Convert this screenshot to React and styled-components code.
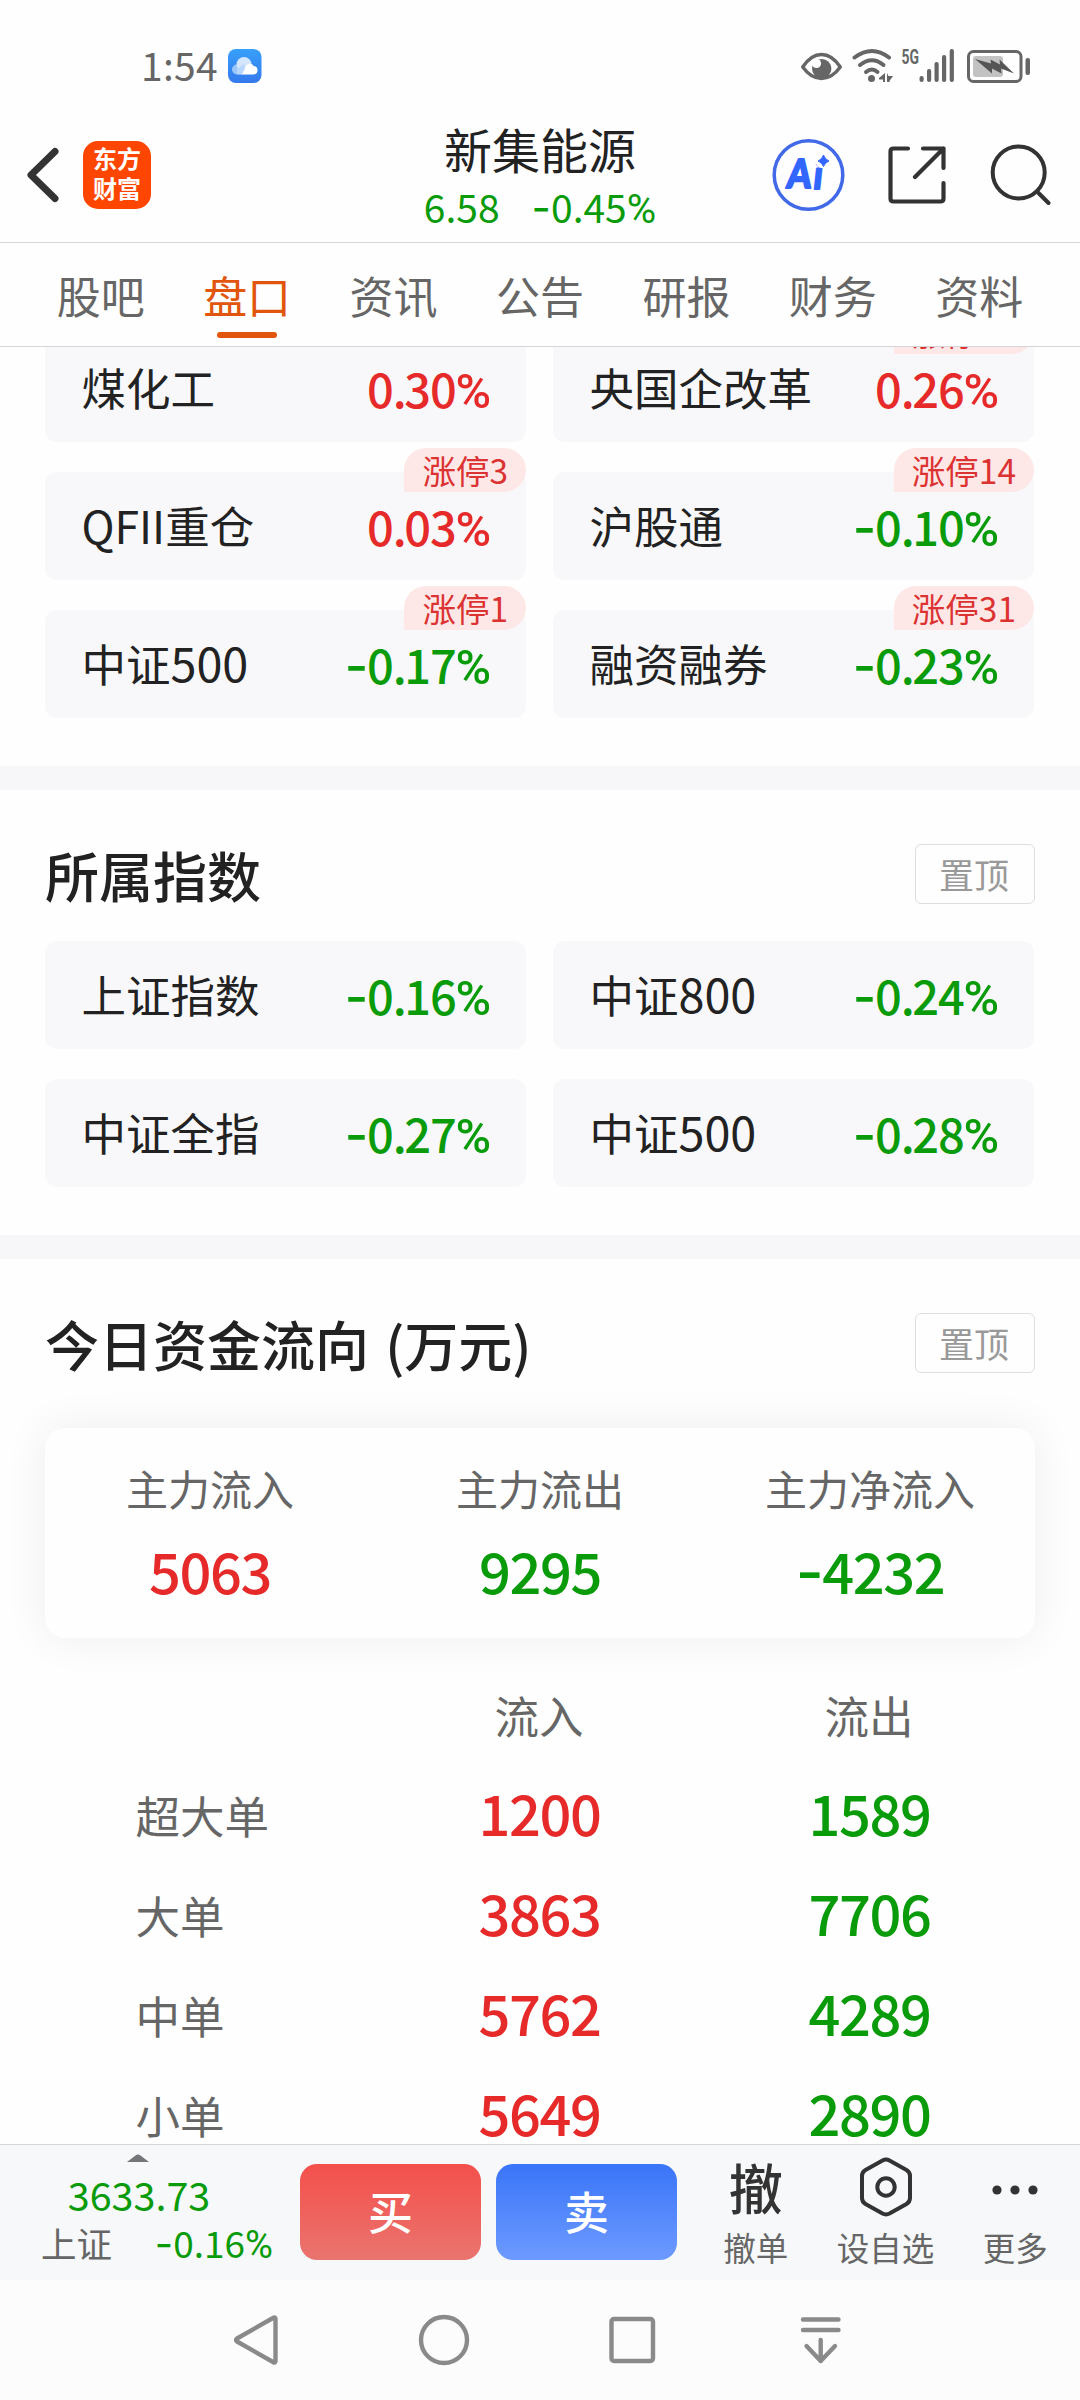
import React from "react";
import styled, { createGlobalStyle, css } from "styled-components";

const RED = "#e62a2a";
const GREEN = "#0a9b0a";
const CJK = `"Noto Sans CJK SC", "Noto Sans", sans-serif`;

const toneColor = { up: RED, down: GREEN };

const GlobalStyle = createGlobalStyle`
  * { box-sizing: border-box; }
  body { margin: 0; background: #fefefe; }
`;

const Screen = styled.div`
  width: 1080px;
  height: 2400px;
  display: flex;
  flex-direction: column;
  overflow: hidden;
  background: #fefefe;
  color: #222;
  font-family: ${CJK};
  line-height: 1;
  white-space: nowrap;
`;

/* ---------- numbers ---------- */

const Figure = styled.span`
  display: inline-flex;
  align-items: baseline;
  font-size: ${(p) => p.$size}px;
  font-weight: ${(p) => p.$weight || 400};
  letter-spacing: ${(p) => (p.$weight ? "-0.025em" : "0")};
  color: ${(p) => toneColor[p.$tone] || "inherit"};
  line-height: 1;
`;

const Sign = styled.span`
  font-family: Inter, sans-serif;
  font-size: 1.08em;
  line-height: 0;
`;

const Point = styled.span`
  letter-spacing: ${(p) => (p.$tight ? "-0.05em" : "0")};
`;

const Percent = styled.span`
  font-family: Roboto, sans-serif;
  font-size: 1.03em;
  line-height: 0;
`;

function Num({ value, size, weight, tone }) {
  const negative = value.startsWith("-");
  const percent = value.endsWith("%");
  const [whole, fraction] = value.replace(/^-/, "").replace(/%$/, "").split(".");
  const resolved = tone || (negative ? "down" : "up");
  return (
    <Figure $size={size} $weight={weight} $tone={resolved}>
      {negative && <Sign>-</Sign>}
      <span>
        {whole}
        {fraction && <Point $tight={Boolean(weight)}>.</Point>}
        {fraction}
      </span>
      {percent && <Percent>%</Percent>}
    </Figure>
  );
}

/* ---------- status bar ---------- */

const StatusBar = styled.div`
  flex: none;
  height: 108px;
  padding: 24px 49px 0 141px;
  display: flex;
  align-items: center;
  color: #666;
`;

const Clock = styled.span`
  font-size: 39px;
  letter-spacing: 0.3px;
  padding-bottom: 3px;
  margin-right: 10px;
`;

const StatusIcons = styled.div`
  margin-left: auto;
  display: flex;
  align-items: center;
`;

const CloudIcon = () => (
  <svg width="34" height="34" viewBox="0 0 34 34">
    <defs>
      <linearGradient id="cloudBg" x1="0" y1="0" x2="0" y2="1">
        <stop offset="0" stopColor="#37a0fb" />
        <stop offset="1" stopColor="#3579ec" />
      </linearGradient>
    </defs>
    <rect width="33.500" height="34" rx="8" fill="url(#cloudBg)" />
    <circle cx="9" cy="20.500" r="5" fill="#9cc6fa" />
    <circle cx="16" cy="15.500" r="7.500" fill="#d3e6fd" />
    <path d="M12 25.500 Q15 24 17 19 Q19 14 23.500 15 Q25 15.500 25.500 17 Q29.500 17.500 29.500 21.200 Q29.500 25.500 25 25.500Z" fill="#fff" />
    <path d="M9 20 L16 15 L17 19 Q15 24 12 25.500 L9 25.500Z" fill="#b9d7fc" />
  </svg>
);

const StatusGlyphs = () => (
  <svg width="231" height="40" viewBox="800 45 231 40" fill="none">
    <circle cx="821.700" cy="67.700" r="9.700" fill="#666" />
    <circle cx="816.500" cy="62.500" r="4.600" fill="#fefefe" />
    <path d="M802.700 66 Q811 53.500 821.500 53.500 Q832 53.500 840.300 66 Q832 77.500 821.500 77.500 Q811 77.500 802.700 66Z" stroke="#666" strokeWidth="3.400" strokeLinejoin="round" />
    <g stroke="#666" strokeWidth="4" strokeLinecap="round">
      <path d="M854.500 56.500 Q872 43.500 889 56.500" />
      <path d="M860 64 Q872 54.500 883.500 64" />
      <path d="M866 71 Q872 66 877.500 71" />
    </g>
    <circle cx="871.500" cy="77.500" r="3.500" fill="#666" />
    <path d="M879 77 L885 72 L885 81 L883 81 L883 78.500 L879 78.500Z" fill="#666" />
    <path d="M887 72 L888.500 75 L893 75 L889.500 80 L889.500 81 L887 81Z" fill="#666" />
    <text x="901.500" y="63" fontSize="20" fontWeight="700" fontFamily="Roboto, sans-serif" fill="#666" textLength="17.500" lengthAdjust="spacingAndGlyphs">5G</text>
    <g fill="#666">
      <rect x="919.500" y="75" width="4.200" height="6" rx="2" />
      <rect x="927" y="68" width="4.200" height="13" rx="2" />
      <rect x="934.500" y="61" width="4.200" height="20" rx="2" />
      <rect x="942" y="54" width="4.200" height="27" rx="2" />
      <rect x="949.700" y="48" width="4.200" height="33" rx="2" />
    </g>
    <rect x="968.500" y="50.500" width="52.500" height="30" rx="5" stroke="#666" strokeWidth="3" />
    <rect x="973" y="55" width="30" height="21" rx="3" fill="#c2c2c2" />
    <path d="M975 58 L991 62.500 L990.500 58.500 L1000 63.500 L999.500 58.500 L1014 72.500 L1001 67.500 L1001.500 72.500 L992 67.500 L992 72.500Z" fill="#555" />
    <rect x="1025.500" y="57" width="4.500" height="17" rx="2" fill="#666" />
  </svg>
);

/* ---------- header ---------- */

const Header = styled.header`
  flex: none;
  height: 135px;
  display: grid;
  grid-template-columns: 1fr auto 1fr;
  align-items: center;
  padding: 0 29px 0 26px;
  border-bottom: 1px solid #d5d5d7;
`;

const HeaderLeft = styled.div`
  display: flex;
  align-items: center;
  gap: 24px;
`;

const HeaderRight = styled.div`
  display: flex;
  align-items: center;
  justify-content: flex-end;
  gap: 43px;
`;

const BrandMark = styled.div`
  width: 68px;
  height: 68px;
  border-radius: 15px;
  background: #fe4600;
  color: #fff;
  font-size: 24px;
  font-weight: 700;
  line-height: 30px;
  text-align: center;
  padding-top: 2px;
`;

const StockTitle = styled.div`
  display: flex;
  flex-direction: column;
  align-items: center;
  padding: 5px 0 0 3px;
`;

const StockName = styled.h1`
  margin: 0;
  font-size: 48px;
  font-weight: 400;
  line-height: 58px;
`;

const StockQuote = styled.div`
  display: flex;
  gap: 32px;
  height: 60px;
  align-items: center;
`;

const BackIcon = () => (
  <svg width="33" height="56" viewBox="0 0 33 56" fill="none" stroke="#333" strokeWidth="7" strokeLinecap="round" strokeLinejoin="round">
    <path d="M29 4.500 L5 28 L29 51.500" />
  </svg>
);

const AiIcon = () => (
  <svg width="73" height="74" viewBox="0.500 0 73 74">
    <circle cx="37" cy="37" r="34.300" fill="none" stroke="#4169e8" strokeWidth="3.500" />
    <text transform="translate(14.500 49.500) skewX(-6) scale(0.86 1)" fontSize="40" fontWeight="900" fontFamily="Lato, sans-serif" fill="#3366ff" stroke="#3366ff" strokeWidth="2" strokeLinejoin="round">
      A<tspan dx="3" dy="1">i</tspan>
    </text>
    <circle cx="51.500" cy="22" r="8.200" fill="#fefefe" />
    <path d="M52 17 Q53.500 21.500 57.500 23 Q53.500 24.500 52 28.500 Q50.500 24.500 46.500 23 Q50.500 21.500 52 17Z" fill="#3366ff" stroke="#3366ff" strokeLinejoin="round" />
  </svg>
);

const ShareIcon = () => (
  <svg width="58" height="60" viewBox="1 0 58 60" fill="none" stroke="#333" strokeWidth="4.200" strokeLinecap="round" strokeLinejoin="round">
    <path d="M21 3.500 H6.500 Q3.500 3.500 3.500 6.500 V53.500 Q3.500 56.500 6.500 56.500 H53.500 Q56.500 56.500 56.500 53.500 V38" />
    <path d="M36 3.500 H56.500 V23 M56.500 3.500 L28 32" />
  </svg>
);

const SearchIcon = () => (
  <svg width="62" height="62" viewBox="0 0 62 62" fill="none" stroke="#333" strokeWidth="4" strokeLinecap="round">
    <circle cx="29.700" cy="28.500" r="26" />
    <path d="M48 47.500 L59.500 59" />
  </svg>
);

/* ---------- tabs ---------- */

const Tabs = styled.nav`
  flex: none;
  height: 104px;
  padding: 0 27.500px;
  display: flex;
  border-bottom: 1px solid #d5d5d7;
`;

const Tab = styled.div`
  flex: 1;
  display: flex;
  flex-direction: column;
  align-items: center;
  font-size: 44px;
  line-height: 60px;
  padding-top: 22px;
  color: ${(p) => (p.$active ? "#e1560c" : "#666")};
  ${(p) =>
    p.$active &&
    css`
      &::after {
        content: "";
        width: 60px;
        height: 6px;
        margin-top: 7px;
        border-radius: 3px;
        background: #e1560c;
      }
    `}
`;

/* ---------- content ---------- */

const Content = styled.main`
  flex: 1;
  min-height: 0;
  overflow: hidden;
`;

const Section = styled.section`
  padding: 0 45px 48px;
`;

const ScrolledSection = styled(Section)`
  margin-top: -13px;
`;

const Divider = styled.div`
  height: 24px;
  background: #f7f7f9;
`;

const QuoteGrid = styled.div`
  display: grid;
  grid-template-columns: 481px 481px;
  gap: 30px 27px;
`;

const QuoteCard = styled.div`
  position: relative;
  height: 108px;
  padding: 0 36px 2px 36.500px;
  display: flex;
  align-items: center;
  justify-content: space-between;
  background: #f8f8fa;
  border-radius: 12px;
`;

const QuoteName = styled.span`
  font-size: 44.500px;
`;

const NameDigits = styled.span`
  font-size: 1.05em;
  line-height: 0;
`;

const LimitBadge = styled.span`
  position: absolute;
  right: 0;
  top: -24px;
  height: 44px;
  padding: 0 18px;
  line-height: 44px;
  font-size: 33.500px;
  color: #dc3232;
  background: #fde8e7;
  border-radius: 22px 22px 22px 0;
`;

const SectionHead = styled.div`
  height: 151px;
  padding: 54px 0 37px;
  display: flex;
  align-items: center;
  justify-content: space-between;
`;

const SectionTitle = styled.h2`
  margin: 0;
  font-size: 54px;
  font-weight: 500;
  line-height: 60px;
  padding-top: 2px;
  word-spacing: 4px;
`;

const PinButton = styled.button`
  width: 120px;
  height: 60px;
  padding: 0 2px 0 0;
  border: 1px solid #dedede;
  border-radius: 6px;
  background: #fefefe;
  color: #999;
  font: 400 35px/56px ${CJK};
`;

const SummaryCard = styled.div`
  display: grid;
  grid-template-columns: repeat(3, 1fr);
  height: 210px;
  margin-top: 18px;
  border-radius: 20px;
  background: #fefefe;
  box-shadow: 0 0 44px rgba(0, 0, 0, 0.07);
`;

const SummaryCell = styled.div`
  display: flex;
  flex-direction: column;
  align-items: center;
  padding-top: 39px;
  gap: 33px;
`;

const SummaryLabel = styled.span`
  font-size: 42px;
  color: #666;
`;

const FlowTable = styled.div`
  display: grid;
  grid-template-columns: repeat(3, 1fr);
  grid-template-rows: 94px repeat(4, 100px);
  margin-top: 31px;
  justify-items: center;
  align-items: center;
`;

const FlowLabel = styled.span`
  justify-self: ${(p) => (p.$row ? "start" : "center")};
  padding: ${(p) => (p.$row ? "4px 0 0 90.5px" : "0 2px 2px 0")};
  font-size: 44.500px;
  color: #666;
`;

const FlowValue = styled.span`
  padding: 0 1px 3px 0;
`;

/* ---------- trade bar ---------- */

const TradeBar = styled.footer`
  flex: none;
  height: 136px;
  display: flex;
  border-top: 1px solid #d3d6da;
  background: #f6f8fa;
`;

const IndexTicker = styled.div`
  width: 300px;
  display: flex;
  flex-direction: column;
  padding: 9px 24px 0 0;
  align-items: center;
`;

const IndexValue = styled.div`
  height: 48px;
  margin-top: 8px;
  padding-left: 2px;
  display: flex;
  align-items: center;
`;

const IndexChange = styled.div`
  align-self: stretch;
  height: 48px;
  padding: 1px 3px 0 41px;
  display: flex;
  align-items: center;
  justify-content: space-between;
  color: #666;
  font-size: 35.500px;
`;

const TradeButton = styled.button`
  width: 181px;
  height: 96px;
  margin: 19px 15px 0 0;
  padding: 0 0 4px;
  border: 0;
  border-radius: 17px;
  color: #fff;
  font: 500 45px/1 ${CJK};
  background: ${(p) =>
    p.$side === "buy"
      ? "linear-gradient(#f4504b, #ea746f)"
      : "linear-gradient(#3a75f8, #6d9aff)"};
`;

const Actions = styled.div`
  flex: 1;
  display: grid;
  grid-template-columns: repeat(3, 1fr);
  margin-left: -1px;
`;

const Action = styled.div`
  display: flex;
  flex-direction: column;
  align-items: center;
  font-size: 32.500px;
  color: #666;
`;

const ActionIcon = styled.div`
  height: 86px;
  display: flex;
  align-items: center;
  justify-content: center;
  color: #333;
  font-size: 54px;
`;

const CancelGlyph = styled.span`
  font-weight: 500;
  padding-bottom: 3px;
`;

const SettingIcon = () => (
  <svg width="56" height="62" viewBox="-1 0 56 62" fill="none" stroke="#333" strokeWidth="4">
    <path d="M24.500 3.500 Q28 1.700 31.500 3.500 L48.500 13 Q52 15 52 19 V41 Q52 45 48.500 47 L31.500 56.500 Q28 58.300 24.500 56.500 L7.500 47 Q4 45 4 41 V19 Q4 15 7.500 13Z" />
    <circle cx="28" cy="30" r="8.700" />
  </svg>
);

const MoreIcon = () => (
  <svg width="48" height="14" viewBox="0 0 48 14" fill="#333">
    <circle cx="6" cy="9" r="4.600" />
    <circle cx="24" cy="9" r="4.600" />
    <circle cx="42" cy="9" r="4.600" />
  </svg>
);

/* ---------- system navigation ---------- */

const SystemNav = styled.div`
  flex: none;
  height: 120px;
  padding: 0 164px 0 161px;
  display: grid;
  grid-template-columns: repeat(4, 1fr);
  place-items: center;
  background: #fcfcfc;
`;

const NavIcon = ({ children }) => (
  <svg width="54" height="54" viewBox="0 0 54 54" fill="none" stroke="#8a8a8a" strokeWidth="4.400" strokeLinecap="round" strokeLinejoin="round">
    {children}
  </svg>
);

const tabs = ["股吧", "盘口", "资讯", "公告", "研报", "财务", "资料"];

const sectors = [
  { name: "煤化工", change: "0.30%" },
  { name: "央国企改革", change: "0.26%", limit: "涨停16" },
  { name: "QFII重仓", change: "0.03%", limit: "涨停3" },
  { name: "沪股通", change: "-0.10%", limit: "涨停14" },
  { name: "中证500", change: "-0.17%", limit: "涨停1" },
  { name: "融资融券", change: "-0.23%", limit: "涨停31" },
];

const indices = [
  { name: "上证指数", change: "-0.16%" },
  { name: "中证800", change: "-0.24%" },
  { name: "中证全指", change: "-0.27%" },
  { name: "中证500", change: "-0.28%" },
];

const summary = [
  { label: "主力流入", value: "5063", tone: "up" },
  { label: "主力流出", value: "9295", tone: "down" },
  { label: "主力净流入", value: "-4232", tone: "down" },
];

const flows = [
  { name: "超大单", inflow: "1200", outflow: "1589" },
  { name: "大单", inflow: "3863", outflow: "7706" },
  { name: "中单", inflow: "5762", outflow: "4289" },
  { name: "小单", inflow: "5649", outflow: "2890" },
];

const Name = ({ text }) => {
  const [, label, digits] = text.match(/^(.*?)(\d*)$/);
  return (
    <QuoteName>
      {label}
      {digits && <NameDigits>{digits}</NameDigits>}
    </QuoteName>
  );
};

const Quotes = ({ items }) => (
  <QuoteGrid>
    {items.map((item) => (
      <QuoteCard key={item.name}>
        <Name text={item.name} />
        <Num value={item.change} size={47} weight={500} />
        {item.limit && <LimitBadge>{item.limit}</LimitBadge>}
      </QuoteCard>
    ))}
  </QuoteGrid>
);

const Heading = ({ children }) => (
  <SectionHead>
    <SectionTitle>{children}</SectionTitle>
    <PinButton>置顶</PinButton>
  </SectionHead>
);

export default function App() {
  return (
    <Screen>
      <GlobalStyle />
      <StatusBar>
        <Clock>1:54</Clock>
        <CloudIcon />
        <StatusIcons>
          <StatusGlyphs />
        </StatusIcons>
      </StatusBar>

      <Header>
        <HeaderLeft>
          <BackIcon />
          <BrandMark>
            东方
            <br />
            财富
          </BrandMark>
        </HeaderLeft>
        <StockTitle>
          <StockName>新集能源</StockName>
          <StockQuote>
            <Num value="6.58" size={39} tone="down" />
            <Num value="-0.45%" size={39} />
          </StockQuote>
        </StockTitle>
        <HeaderRight>
          <AiIcon />
          <ShareIcon />
          <SearchIcon />
        </HeaderRight>
      </Header>

      <Tabs>
        {tabs.map((name) => (
          <Tab key={name} $active={name === "盘口"}>
            {name}
          </Tab>
        ))}
      </Tabs>

      <Content>
        <ScrolledSection>
          <Quotes items={sectors} />
        </ScrolledSection>
        <Divider />
        <Section>
          <Heading>所属指数</Heading>
          <Quotes items={indices} />
        </Section>
        <Divider />
        <Section>
          <Heading>今日资金流向 (万元)</Heading>
          <SummaryCard>
            {summary.map((cell) => (
              <SummaryCell key={cell.label}>
                <SummaryLabel>{cell.label}</SummaryLabel>
                <Num value={cell.value} size={56} weight={500} tone={cell.tone} />
              </SummaryCell>
            ))}
          </SummaryCard>
          <FlowTable>
            <span />
            <FlowLabel>流入</FlowLabel>
            <FlowLabel>流出</FlowLabel>
            {flows.map((row) => (
              <React.Fragment key={row.name}>
                <FlowLabel $row>{row.name}</FlowLabel>
                <FlowValue>
                  <Num value={row.inflow} size={56} weight={500} tone="up" />
                </FlowValue>
                <FlowValue>
                  <Num value={row.outflow} size={56} weight={500} tone="down" />
                </FlowValue>
              </React.Fragment>
            ))}
          </FlowTable>
        </Section>
      </Content>

      <TradeBar>
        <IndexTicker>
          <svg width="22" height="8" viewBox="0 0 22 8">
            <path d="M0 8 L8.500 1.500 Q11 -0.500 13.500 1.500 L22 8Z" fill="#76767a" />
          </svg>
          <IndexValue>
            <Num value="3633.73" size={39.5} tone="down" />
          </IndexValue>
          <IndexChange>
            <span>上证</span>
            <Num value="-0.16%" size={37} />
          </IndexChange>
        </IndexTicker>
        <TradeButton $side="buy">买</TradeButton>
        <TradeButton $side="sell">卖</TradeButton>
        <Actions>
          <Action>
            <ActionIcon>
              <CancelGlyph>撤</CancelGlyph>
            </ActionIcon>
            撤单
          </Action>
          <Action>
            <ActionIcon>
              <SettingIcon />
            </ActionIcon>
            设自选
          </Action>
          <Action>
            <ActionIcon>
              <MoreIcon />
            </ActionIcon>
            更多
          </Action>
        </Actions>
      </TradeBar>

      <SystemNav>
        <NavIcon>
          <path d="M45 5 Q47.500 3.500 47.500 6 V48 Q47.500 50.500 45 49 L9 28.500 Q7 27 9 25.500Z" />
        </NavIcon>
        <NavIcon>
          <circle cx="27" cy="27" r="23" />
        </NavIcon>
        <NavIcon>
          <rect x="5.500" y="6" width="41.500" height="42" rx="2.500" />
        </NavIcon>
        <NavIcon>
          <path d="M8 6.500 H43.500 M8 17 H43.500 M25.700 27 V48 M11.500 33 L25.700 48 L40 33" />
        </NavIcon>
      </SystemNav>
    </Screen>
  );
}
